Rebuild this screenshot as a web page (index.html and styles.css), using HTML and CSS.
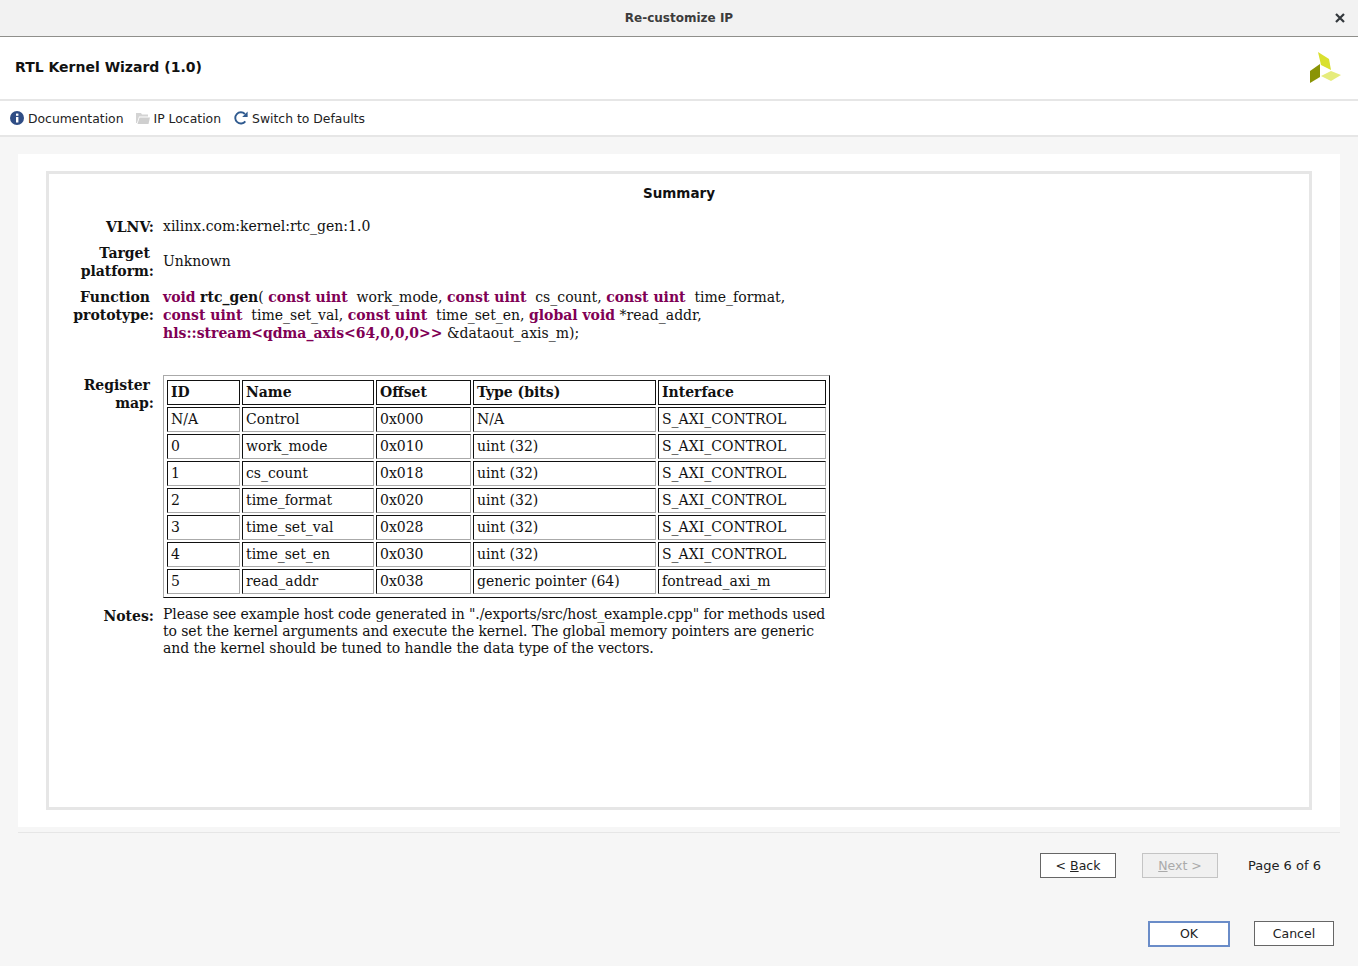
FILE: index.html
```html
<!DOCTYPE html>
<html>
<head>
  <meta charset="UTF-8">
  <title>Re-customize IP</title>
  <link rel="stylesheet" href="styles.css">
</head>
<body>
  <div class="titlebar">
    <span class="title">Re-customize IP</span>
    <svg class="close" width="10" height="10" viewBox="0 0 10 10"><path d="M1 1L9 9M9 1L1 9" stroke="#33383c" stroke-width="2.2"/></svg>
  </div>

  <div class="header">
    <span class="ip-name">RTL Kernel Wizard (1.0)</span>
    <svg class="logo" width="32" height="32" viewBox="0 0 32 32">
      <polygon points="8,0 19,7 21,18 11,13" fill="#d9e02f"/>
      <polygon points="10,12 10,25 0,31 0,19" fill="#8a9406"/>
      <polygon points="11,24 21,19 31,23 21,29" fill="#e6ec7c"/>
    </svg>
  </div>

  <div class="toolbar">
    <span class="tool">
      <svg width="14" height="14" viewBox="0 0 14 14"><circle cx="7" cy="7" r="7" fill="#2f4d85"/><rect x="6" y="6" width="2.4" height="5.5" fill="#fff"/><rect x="6" y="2.6" width="2.4" height="2.2" fill="#fff"/></svg>
      Documentation
    </span>
    <span class="tool">
      <svg width="14" height="12" viewBox="0 0 14 12"><path d="M0 1h5l1 1.5h6v2H3L1 11H0z" fill="#d4d4d4"/><path d="M3.5 5.5H14L12.500 12H1.500z" fill="#cfcfcf"/></svg>
      IP Location
    </span>
    <span class="tool tool-reset">
      <svg width="14" height="14" viewBox="0 0 14 14"><path d="M11.300 10.300A5.600 5.600 0 1 1 10.900 3" fill="none" stroke="#2f5a8f" stroke-width="1.900"/><polygon points="13.600,0.400 13.600,6 8.200,6" fill="#2f5a8f"/></svg>
      Switch to Defaults
    </span>
  </div>

  <div class="main">
    <div class="panel">
      <div class="frame">
        <h2 class="summary">Summary</h2>

        <div class="row row-vlnv">
          <div class="label">VLNV:</div>
          <div class="value">xilinx.com:kernel:rtc_gen:1.0</div>
        </div>

        <div class="row row-target">
          <div class="label"><span class="indent">Target</span><br>platform:</div>
          <div class="value value-mid">Unknown</div>
        </div>

        <div class="row row-proto">
          <div class="label"><span class="indent">Function</span><br>prototype:</div>
          <div class="value">
            <b class="kw">void</b> <b>rtc_gen</b>( <b class="kw">const uint</b>&nbsp; work_mode, <b class="kw">const uint</b>&nbsp; cs_count, <b class="kw">const uint</b>&nbsp; time_format,<br>
            <b class="kw">const uint</b>&nbsp; time_set_val, <b class="kw">const uint</b>&nbsp; time_set_en, <b class="kw">global void</b> *read_addr,<br>
            <b class="kw">hls::stream&lt;qdma_axis&lt;64,0,0,0&gt;&gt;</b> &amp;dataout_axis_m);
          </div>
        </div>

        <div class="row row-map">
          <div class="label"><span class="indent">Register</span><br>map:</div>
          <table class="regmap">
            <tr><th class="c-id">ID</th><th class="c-name">Name</th><th class="c-off">Offset</th><th class="c-type">Type (bits)</th><th class="c-if">Interface</th></tr>
            <tr><td>N/A</td><td>Control</td><td>0x000</td><td>N/A</td><td>S_AXI_CONTROL</td></tr>
            <tr><td>0</td><td>work_mode</td><td>0x010</td><td>uint (32)</td><td>S_AXI_CONTROL</td></tr>
            <tr><td>1</td><td>cs_count</td><td>0x018</td><td>uint (32)</td><td>S_AXI_CONTROL</td></tr>
            <tr><td>2</td><td>time_format</td><td>0x020</td><td>uint (32)</td><td>S_AXI_CONTROL</td></tr>
            <tr><td>3</td><td>time_set_val</td><td>0x028</td><td>uint (32)</td><td>S_AXI_CONTROL</td></tr>
            <tr><td>4</td><td>time_set_en</td><td>0x030</td><td>uint (32)</td><td>S_AXI_CONTROL</td></tr>
            <tr><td>5</td><td>read_addr</td><td>0x038</td><td>generic pointer (64)</td><td>fontread_axi_m</td></tr>
          </table>
        </div>

        <div class="row row-notes">
          <div class="label">Notes:</div>
          <div class="value value-notes">Please see example host code generated in "./exports/src/host_example.cpp" for methods used<br>to set the kernel arguments and execute the kernel. The global memory pointers are generic<br>and the kernel should be tuned to handle the data type of the vectors.</div>
        </div>
      </div>
    </div>

    <div class="divider"></div>

    <div class="nav">
      <button class="btn btn-nav">&lt; <u>B</u>ack</button>
      <button class="btn btn-nav btn-off"><u>N</u>ext &gt;</button>
      <span class="page">Page 6 of 6</span>
    </div>

    <div class="actions">
      <button class="btn btn-ok">OK</button>
      <button class="btn btn-cancel">Cancel</button>
    </div>
  </div>
</body>
</html>
```

FILE: styles.css
```css
html, body {
  margin: 0;
  height: 100%;
}

body {
  width: 1358px;
  height: 966px;
  overflow: hidden;
  background: #f6f6f6;
  font-family: "DejaVu Sans", sans-serif;
  font-size: 12.5px;
  color: #222;
}

.titlebar {
  height: 36px;
  background: #f2f2f2;
  border-bottom: 1px solid #8f8f8b;
  display: flex;
  align-items: center;
  justify-content: center;
  position: relative;
}

.title {
  font-weight: bold;
  font-size: 12px;
  color: #3c3c3c;
  margin-top: -1px;
}

.close {
  position: absolute;
  right: 13px;
  top: 13px;
}

.header {
  height: 62px;
  background: white;
  border-bottom: 2px solid #e6e6e6;
  display: flex;
  align-items: center;
  justify-content: space-between;
  padding: 0 15px;
}

.ip-name {
  font-weight: bold;
  font-size: 14px;
  color: #111;
  margin-top: -3px;
}

.logo {
  margin-right: 1px;
}

.toolbar {
  height: 34px;
  background: white;
  border-bottom: 2px solid #e6e6e6;
  display: flex;
  align-items: center;
  padding-left: 10px;
  gap: 12px;
  font-size: 12.4px;
}

.tool {
  display: flex;
  align-items: center;
  gap: 4px;
}

.tool-reset {
  margin-left: 1px;
}

.main {
  padding: 17px 18px 0;
}

.panel {
  height: 673px;
  background: white;
  padding: 17px 28px;
  box-sizing: border-box;
}

.frame {
  height: 639px;
  box-sizing: border-box;
  border: 3px solid #e6e6e6;
  padding-top: 9px;
  font-family: "DejaVu Serif", serif;
  font-size: 14px;
  color: #111;
}

.summary {
  margin: 0 0 14px;
  text-align: center;
  font-family: "DejaVu Sans", sans-serif;
  font-size: 13.5px;
  line-height: 20px;
  font-weight: bold;
}

.row {
  display: flex;
  align-items: flex-start;
  gap: 9px;
  line-height: 18px;
}

.label {
  width: 105px;
  text-align: right;
  font-weight: bold;
  flex-shrink: 0;
}

.indent {
  margin-right: 4px;
}

.kw {
  color: #7f0055;
}

.row-vlnv {
  margin-bottom: 8px;
}

.row-vlnv .label, .row-notes .label {
  padding-top: 1px;
}

.row-target {
  margin-bottom: 8px;
}

.value-mid {
  margin-top: 8px;
}

.row-map {
  margin-top: 34px;
  height: 222px;
}

.row-notes {
  margin-top: 8px;
}

.value-notes {
  line-height: 17px;
  letter-spacing: -0.1px;
}

.regmap {
  border: 1px solid;
  border-color: #aaa #111 #111 #aaa;
  border-spacing: 2px;
  padding: 2px 1px 1px;
  line-height: 17px;
  margin-top: -1px;
}

.regmap th, .regmap td {
  border: 1px solid;
  border-color: #111 #aaa #aaa #111;
  padding: 3px;
  text-align: left;
  height: 17px;
}

.regmap th {
  border-color: #111;
}

.c-id { width: 65px; }
.c-name { width: 124px; }
.c-off { width: 87px; }
.c-type { width: 175px; }
.c-if { width: 160px; }

.divider {
  height: 1px;
  background: #e6e6e6;
  margin-top: 5px;
}

.nav {
  display: flex;
  align-items: center;
  margin-top: 20px;
  padding-left: 1022px;
}

.btn {
  font-family: "DejaVu Sans", sans-serif;
  font-size: 12.5px;
  background: white;
  border: 1px solid #666;
  padding: 0;
  color: #222;
  height: 25px;
}

.btn-nav {
  width: 76px;
  margin-right: 26px;
}

.btn-off {
  background: #f0f0f0;
  border-color: #c4c4c4;
  color: #aaa;
  margin-right: 30px;
}

.page {
  font-size: 13px;
}

.actions {
  display: flex;
  justify-content: flex-end;
  margin-top: 43px;
  margin-right: 6px;
  gap: 24px;
}

.btn-ok {
  width: 82px;
  height: 26px;
  border: 2px solid #6a8cc8;
  padding-bottom: 2px;
}

.btn-cancel {
  width: 80px;
}
```
